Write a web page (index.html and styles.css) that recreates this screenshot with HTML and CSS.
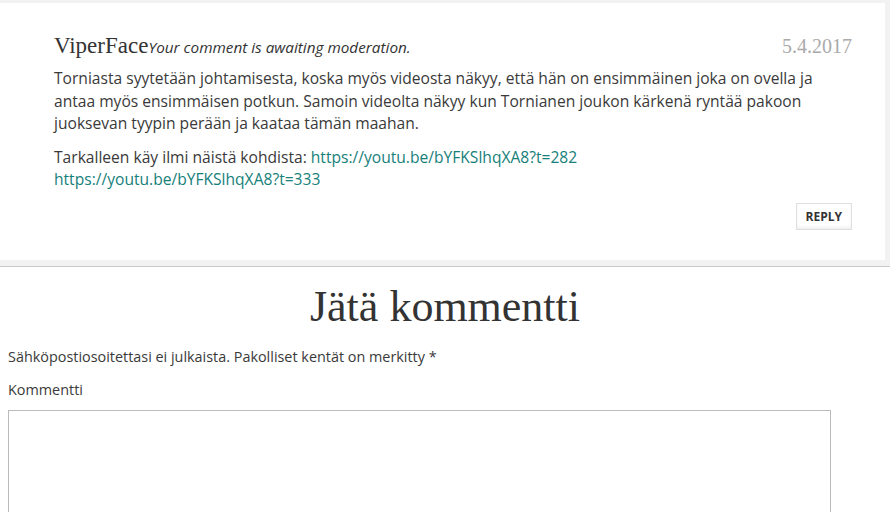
FILE: index.html
```html
<!DOCTYPE html>
<html lang="fi">
<head>
<meta charset="utf-8">
<title>Jätä kommentti</title>
<link rel="stylesheet" href="styles.css">
</head>
<body>
<div class="comments-wrap">
  <article class="comment">
    <header class="comment-head">
      <div class="author"><span class="name">ViperFace</span><em class="awaiting">Your comment is awaiting moderation.</em></div>
      <time class="date">5.4.2017</time>
    </header>
    <div class="comment-body">
      <p>Torniasta syytetään johtamisesta, koska myös videosta näkyy, että hän on ensimmäinen joka on ovella ja antaa myös ensimmäisen potkun. Samoin videolta näkyy kun Tornianen joukon kärkenä ryntää pakoon juoksevan tyypin perään ja kaataa tämän maahan.</p>
      <p>Tarkalleen käy ilmi näistä kohdista: <a href="#">https://youtu.be/bYFKSlhqXA8?t=282</a><br><a href="#">https://youtu.be/bYFKSlhqXA8?t=333</a></p>
    </div>
    <div class="reply-row"><a class="reply" href="#">Reply</a></div>
  </article>
</div>
<section class="respond">
  <h3 class="respond-title">Jätä kommentti</h3>
  <p class="notes">Sähköpostiosoitettasi ei julkaista. Pakolliset kentät on merkitty <span class="req">*</span></p>
  <label class="field-label" for="comment">Kommentti</label>
  <textarea id="comment" class="comment-input"></textarea>
</section>
</body>
</html>
```
FILE: styles.css
```css
html, body {
  margin: 0;
  padding: 0;
  background: #fff;
}
body {
  font-family: "Open Sans", "Liberation Sans", sans-serif;
  color: #3a3a3a;
  font-size: 15.6px;
  line-height: 22.5px;
  overflow: hidden;
}
.comments-wrap {
  background: #f2f2f2;
  padding: 3px 5px 6px 0;
  border-bottom: 1px solid #c9c9c9;
}
.comment {
  background: #fff;
  padding: 28px 33px 30px 54px;
}
.comment-head {
  display: flex;
  justify-content: space-between;
  align-items: baseline;
  line-height: 30px;
}
.name {
  font-family: "Liberation Serif", serif;
  font-size: 23px;
  color: #333;
}
.awaiting {
  font-size: 15.3px;
  color: #333;
}
.date {
  font-family: "Liberation Serif", serif;
  font-size: 20px;
  color: #aaa;
}
.comment-body {
  margin-top: 5px;
}
.comment-body p {
  margin: 0 0 11px;
}
.comment-body a {
  color: #16807a;
  text-decoration: none;
}
.reply-row {
  display: flex;
  justify-content: flex-end;
  margin-top: 12px;
}
.reply {
  display: block;
  font-size: 12px;
  font-weight: bold;
  text-transform: uppercase;
  color: #333;
  text-decoration: none;
  line-height: 16px;
  padding: 5px 9px 4px 9px;
  border: 1px solid #e0e0e0;
  box-shadow: inset 0 -2px 3px #f0f0f0;
}
.respond {
  padding: 0 8px;
}
.respond-title {
  font-family: "Liberation Serif", serif;
  font-weight: normal;
  font-size: 44px;
  line-height: 1.2;
  color: #333;
  text-align: center;
  margin: 14px 0 13px;
}
.notes {
  font-size: 14.4px;
  margin: 0 0 10px;
}
.field-label {
  display: block;
  font-size: 14.4px;
  margin-bottom: 9px;
}
.comment-input {
  display: block;
  width: 823px;
  height: 150px;
  margin: 0;
  padding: 0;
  border: 1px solid #bbb;
  box-sizing: border-box;
  resize: none;
}
```
